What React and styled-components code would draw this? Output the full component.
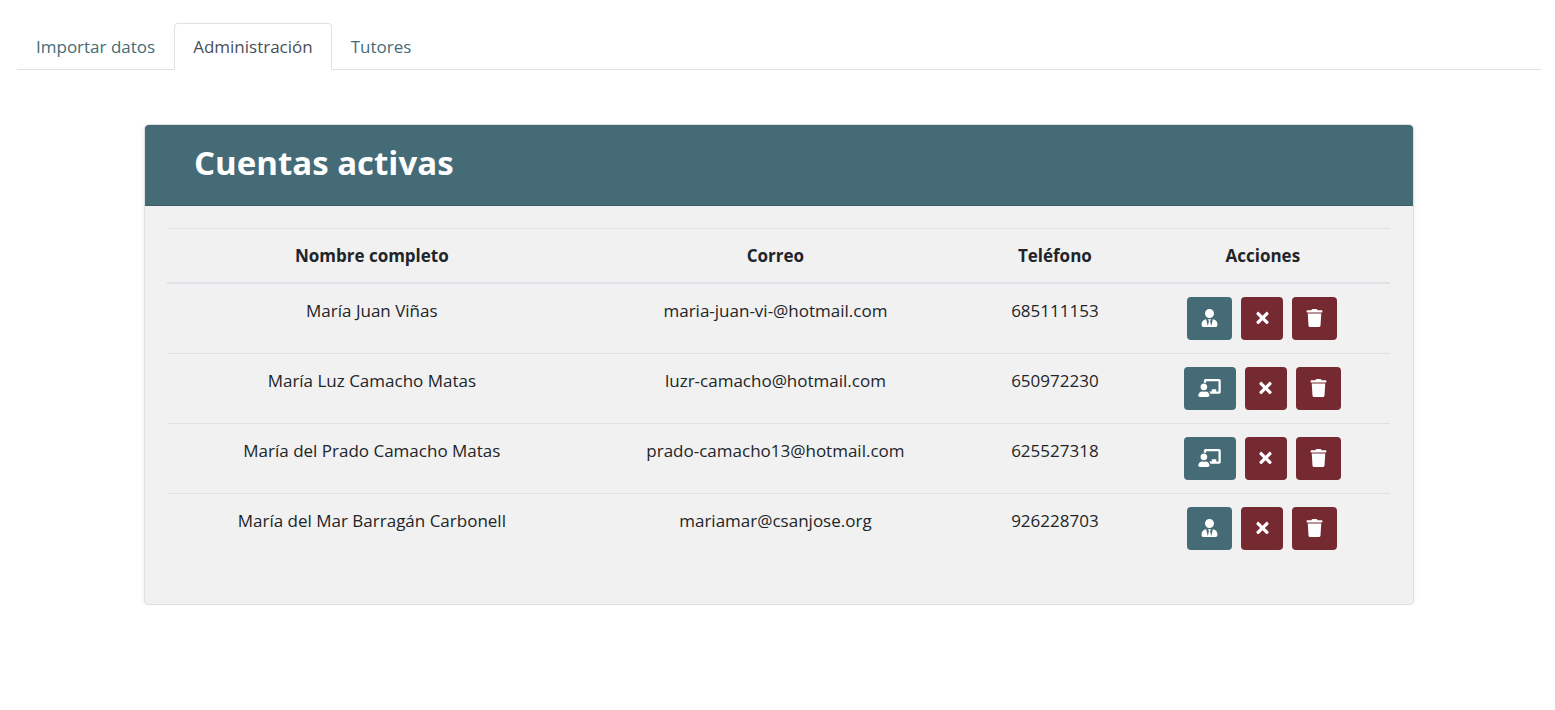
import React from 'react';
import styled, { createGlobalStyle } from 'styled-components';
import { FaUserTie, FaChalkboardTeacher, FaTimes, FaTrash } from 'react-icons/fa';

const GlobalStyle = createGlobalStyle`
  *, *::before, *::after { box-sizing: border-box; }
  body {
    margin: 0;
    background: #fff;
    color: #212529;
    font-family: "Segoe UI", "Open Sans", "Noto Sans", sans-serif;
    font-size: 17px;
    font-weight: 400;
    line-height: 27px;
  }
`;

const Page = styled.div`
  padding: 23px 14px 0 17px;
`;

const Tabs = styled.nav`
  display: flex;
  border-bottom: 1px solid #dee2e6;
`;

const Tab = styled.a`
  margin-bottom: -1px;
  padding: 9px 18px;
  border: 1px solid transparent;
  border-radius: 4px 4px 0 0;
  color: #456c76;
  text-decoration: none;

  &[aria-current] {
    color: #495057;
    background: #fff;
    border-color: #dee2e6 #dee2e6 #fff;
  }
`;

const Card = styled.section`
  width: calc(100% * 10 / 12);
  margin: 54px auto 0;
  border: 1px solid #dddfe6;
  border-radius: 5px;
  background: #f1f1f1;
  box-shadow: 0 2px 4px rgba(0, 0, 0, 0.08);
  overflow: hidden;
`;

const CardHeader = styled.header`
  padding: 16px 49px 20px;
  background: #456c76;
  border-bottom: 1px solid #3c5f68;
`;

const Title = styled.h1`
  margin: 0;
  color: #fff;
  font-size: 33px;
  font-weight: 700;
  line-height: 44px;
`;

const CardBody = styled.div`
  padding: 22px 23px 41px 22px;
`;

const Table = styled.table`
  width: 100%;
  table-layout: fixed;
  border-spacing: 0;
  text-align: center;
`;

const HeadCell = styled.th`
  width: ${({ $width }) => $width};
  padding: 13px;
  border-top: 1px solid #dee2e6;
  border-bottom: 2px solid #dee2e6;
  font-weight: 700;
`;

const Cell = styled.td`
  padding: 13px;
  vertical-align: top;
  border-bottom: 1px solid #dee2e6;

  tr:last-child > & {
    border-bottom: 0;
  }
`;

const Actions = styled.div`
  display: flex;
  justify-content: center;
  gap: 9px;
  padding-right: 1px;
`;

const tones = { teal: '#456c76', wine: '#752930' };

const ActionButton = styled.button`
  display: flex;
  align-items: center;
  justify-content: center;
  width: ${({ $width }) => $width}px;
  height: 43px;
  padding: 0 0 1px;
  border: 0;
  border-radius: 4px;
  background: ${({ $tone }) => tones[$tone]};
  color: #fff;
  cursor: pointer;

  svg {
    display: block;
    flex: none;
    width: 23px;
    height: 18px;
  }
`;

const tabs = ['Importar datos', 'Administración', 'Tutores'];

const columns = [
  { label: 'Nombre completo', width: '33.5%' },
  { label: 'Correo', width: '32.5%' },
  { label: 'Teléfono', width: '13.2%' },
  { label: 'Acciones', width: '20.8%' },
];

const accounts = [
  { name: 'María Juan Viñas', email: 'maria-juan-vi-@hotmail.com', phone: '685111153', role: 'admin' },
  { name: 'María Luz Camacho Matas', email: 'luzr-camacho@hotmail.com', phone: '650972230', role: 'teacher' },
  { name: 'María del Prado Camacho Matas', email: 'prado-camacho13@hotmail.com', phone: '625527318', role: 'teacher' },
  { name: 'María del Mar Barragán Carbonell', email: 'mariamar@csanjose.org', phone: '926228703', role: 'admin' },
];

function AccountRow({ account }) {
  const teacher = account.role === 'teacher';
  return (
    <tr>
      <Cell>{account.name}</Cell>
      <Cell>{account.email}</Cell>
      <Cell>{account.phone}</Cell>
      <Cell>
        <Actions>
          <ActionButton type="button" $tone="teal" $width={teacher ? 52 : 45} aria-label="Cambiar rol">
            {teacher ? <FaChalkboardTeacher /> : <FaUserTie />}
          </ActionButton>
          <ActionButton type="button" $tone="wine" $width={42} aria-label="Desactivar">
            <FaTimes />
          </ActionButton>
          <ActionButton type="button" $tone="wine" $width={45} aria-label="Eliminar">
            <FaTrash />
          </ActionButton>
        </Actions>
      </Cell>
    </tr>
  );
}

export default function App() {
  return (
    <>
      <GlobalStyle />
      <Page>
        <Tabs>
          {tabs.map((label) => (
            <Tab key={label} href="#" aria-current={label === 'Administración' ? 'page' : undefined}>
              {label}
            </Tab>
          ))}
        </Tabs>
        <Card>
          <CardHeader>
            <Title>Cuentas activas</Title>
          </CardHeader>
          <CardBody>
            <Table>
              <thead>
                <tr>
                  {columns.map(({ label, width }) => (
                    <HeadCell key={label} scope="col" $width={width}>{label}</HeadCell>
                  ))}
                </tr>
              </thead>
              <tbody>
                {accounts.map((account) => (
                  <AccountRow key={account.email} account={account} />
                ))}
              </tbody>
            </Table>
          </CardBody>
        </Card>
      </Page>
    </>
  );
}
